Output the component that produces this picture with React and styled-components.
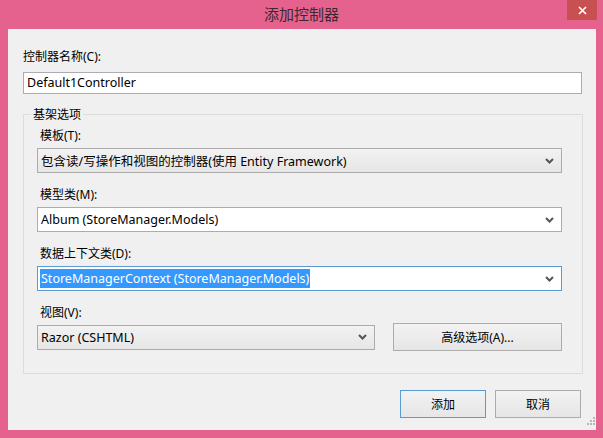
import React from 'react';
import styled, { createGlobalStyle } from 'styled-components';

const GlobalStyle = createGlobalStyle`
  html, body {
    margin: 0;
    padding: 0;
    background: #e6628e;
  }
  * { box-sizing: border-box; }
`;

const font = `"Noto Sans", "Noto Sans CJK SC", sans-serif`;

const Window = styled.div`
  width: 603px;
  height: 438px;
  background: #e6628e;
  display: flex;
  flex-direction: column;
  font-family: ${font};
  font-size: 12px;
  color: #000;
  overflow: hidden;
`;

const TitleBar = styled.div`
  position: relative;
  height: 29px;
  flex: none;
  display: flex;
  align-items: center;
  justify-content: center;
  font-size: 15px;
  color: #3a2a30;
  padding-bottom: 2px;
`;

const CloseButton = styled.div`
  position: absolute;
  top: 0;
  right: 6px;
  width: 30px;
  height: 20px;
  background: #c75050;
  display: flex;
  align-items: center;
  justify-content: center;
`;

const Client = styled.div`
  position: relative;
  flex: 1;
  margin: 0 7px 8px 8px;
  background: #f0f0f0;
  padding: 19px 14px 0 15px;
  display: flex;
  flex-direction: column;
`;

const Label = styled.div`
  height: 17px;
  line-height: 17px;
  padding-left: ${(p) => p.$indent || 0}px;
  margin-bottom: ${(p) => p.$gap ?? 4}px;
  white-space: nowrap;
`;

const TextInput = styled.div`
  height: 22px;
  background: #fff;
  border: 1px solid #abadb3;
  padding: 0 3px;
  line-height: 20px;
  font-size: 12.5px;
`;

const Group = styled.fieldset`
  margin: 13px 0 0 0;
  padding: 5px 20px 0 13px;
  height: 267px;
  border: 1px solid #dcdcdc;
  border-radius: 0;
  display: flex;
  flex-direction: column;
`;

const Legend = styled.legend`
  padding: 0 2px;
  margin-left: -6px;
  line-height: 15px;
`;

const FieldRow = styled.div`
  display: flex;
  flex-direction: column;
  margin-bottom: ${(p) => p.$gap ?? 13}px;
`;

const Select = styled.div`
  height: 25px;
  width: ${(p) => (p.$width ? `${p.$width}px` : 'auto')};
  border: 1px solid ${(p) => (p.$focused ? '#5b9bd5' : '#acacac')};
  background: ${(p) =>
    p.$white ? '#fff' : 'linear-gradient(#f2f2f2, #e6e6e6)'};
  display: flex;
  align-items: center;
  padding: 0 7px 0 2px;
  font-size: 12.5px;
`;

const SelectText = styled.span`
  flex: 1;
  white-space: nowrap;
  overflow: hidden;
`;

const Highlight = styled.span`
  background: #3399ff;
  color: #fff;
  padding: 0 1px;
  line-height: 19px;
  display: inline-block;
`;

const Plain = styled.span`
  padding-left: 1px;
`;

const Chevron = () => (
  <svg width="9" height="6" viewBox="0 0 9 6">
    <path d="M1 1 L4.5 4.5 L8 1" fill="none" stroke="#555" strokeWidth="2" />
  </svg>
);

const ViewRow = styled.div`
  display: flex;
  align-items: center;
  gap: 18px;
  margin-top: -2px;
`;

const Button = styled.div`
  width: ${(p) => p.$width}px;
  height: ${(p) => p.$height}px;
  border: 1px solid ${(p) => (p.$default ? '#5b9bd5' : '#acacac')};
  background: linear-gradient(#f2f2f2, #e6e6e6);
  display: flex;
  align-items: center;
  justify-content: center;
  font-size: 12px;
`;

const Footer = styled.div`
  display: flex;
  justify-content: flex-end;
  gap: 9px;
  margin-top: 16px;
  margin-right: 1px;
`;

const Grip = styled.div`
  position: absolute;
  right: 1px;
  bottom: 1px;
`;

const GripIcon = () => (
  <svg width="8" height="8" viewBox="0 0 8 8">
    {[
      [6, 0],
      [6, 3],
      [3, 3],
      [6, 6],
      [3, 6],
      [0, 6],
    ].map(([x, y]) => (
      <rect key={`${x}-${y}`} x={x} y={y} width="2" height="2" fill="#b8b8b8" />
    ))}
  </svg>
);

export default function App() {
  return (
    <>
      <GlobalStyle />
      <Window>
        <TitleBar>
          添加控制器
          <CloseButton>
            <svg width="9" height="9" viewBox="0 0 9 9">
              <path d="M1 1 L8 8 M8 1 L1 8" stroke="#fff" strokeWidth="1.6" />
            </svg>
          </CloseButton>
        </TitleBar>
        <Client>
          <Label $gap={7}>控制器名称(C):</Label>
          <TextInput>Default1Controller</TextInput>

          <Group>
            <Legend>基架选项</Legend>

            <FieldRow>
              <Label $indent={3}>模板(T):</Label>
              <Select>
                <SelectText>
                  <Plain>包含读/写操作和视图的控制器(使用 Entity Framework)</Plain>
                </SelectText>
                <Chevron />
              </Select>
            </FieldRow>

            <FieldRow>
              <Label $indent={3}>模型类(M):</Label>
              <Select $white>
                <SelectText>
                  <Plain>Album (StoreManager.Models)</Plain>
                </SelectText>
                <Chevron />
              </Select>
            </FieldRow>

            <FieldRow>
              <Label $indent={3}>数据上下文类(D):</Label>
              <Select $white $focused>
                <SelectText>
                  <Highlight>StoreManagerContext (StoreManager.Models)</Highlight>
                </SelectText>
                <Chevron />
              </Select>
            </FieldRow>

            <FieldRow $gap={0}>
              <Label $indent={3}>视图(V):</Label>
              <ViewRow>
                <Select $width={338}>
                  <SelectText>
                    <Plain>Razor (CSHTML)</Plain>
                  </SelectText>
                  <Chevron />
                </Select>
                <Button $width={169} $height={28}>
                  高级选项(A)...
                </Button>
              </ViewRow>
            </FieldRow>
          </Group>

          <Footer>
            <Button $default $width={86} $height={28}>
              添加
            </Button>
            <Button $width={86} $height={28}>
              取消
            </Button>
          </Footer>
          <Grip>
            <GripIcon />
          </Grip>
        </Client>
      </Window>
    </>
  );
}
